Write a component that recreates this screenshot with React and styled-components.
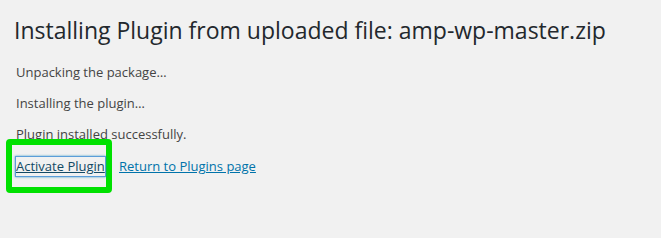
import styled, { createGlobalStyle } from "styled-components";

const GlobalStyle = createGlobalStyle`
    html, body {
        margin: 0;
        padding: 0;
        background: #f1f1f1;
    }
    body {
        width: 661px;
        height: 238px;
        overflow: hidden;
        font-family: "Open Sans", sans-serif;
    }
`;

const App = () => {
    return (
        <>
            <GlobalStyle />
            <Wrap>
                <Title>Installing Plugin from uploaded file: amp-wp-master.zip</Title>
                <Step>Unpacking the package…</Step>
                <Step>Installing the plugin…</Step>
                <Step>Plugin installed successfully.</Step>
                <Actions>
                    <Highlight>
                        <ActionLink href="#" $focused>Activate Plugin</ActionLink>
                    </Highlight>
                    <ActionLink href="#">Return to Plugins page</ActionLink>
                </Actions>
            </Wrap>
        </>
    );
}

export default App;


const Wrap = styled.div`
    padding: 16px 0 0 16px;
`;

const Title = styled.h1`
    margin: 0 0 0 -2px;
    color: #23282d;
    font-family: "Open Sans", sans-serif;
    font-size: 23px;
    font-weight: 400;
    line-height: 29px;
`;

const Step = styled.p`
    margin: 0;
    color: #444;
    font-size: 13px;
    line-height: 19px;
    height: 31px;
    display: flex;
    align-items: center;

    &:first-of-type {
        margin-top: 12px;
    }
`;

const Actions = styled.div`
    display: flex;
    align-items: center;
    gap: 7px;
    margin-left: -10px;
    margin-top: -11px;
`;

const Highlight = styled.div`
    display: flex;
    align-items: center;
    width: 90px;
    height: 42px;
    border: 6px solid #00e100;
    border-radius: 4px;
    padding-left: 4px;
    box-sizing: content-box;
`;

const ActionLink = styled.a`
    color: ${props => props.$focused ? "#124964" : "#0073aa"};
    font-size: 13px;
    line-height: 19px;
    text-decoration: underline;
    white-space: nowrap;
    box-shadow: ${props => props.$focused
        ? "0 0 0 1px #5b9dd9, 0 0 2px 1px rgba(30, 140, 190, 0.8)"
        : "none"};
`;
